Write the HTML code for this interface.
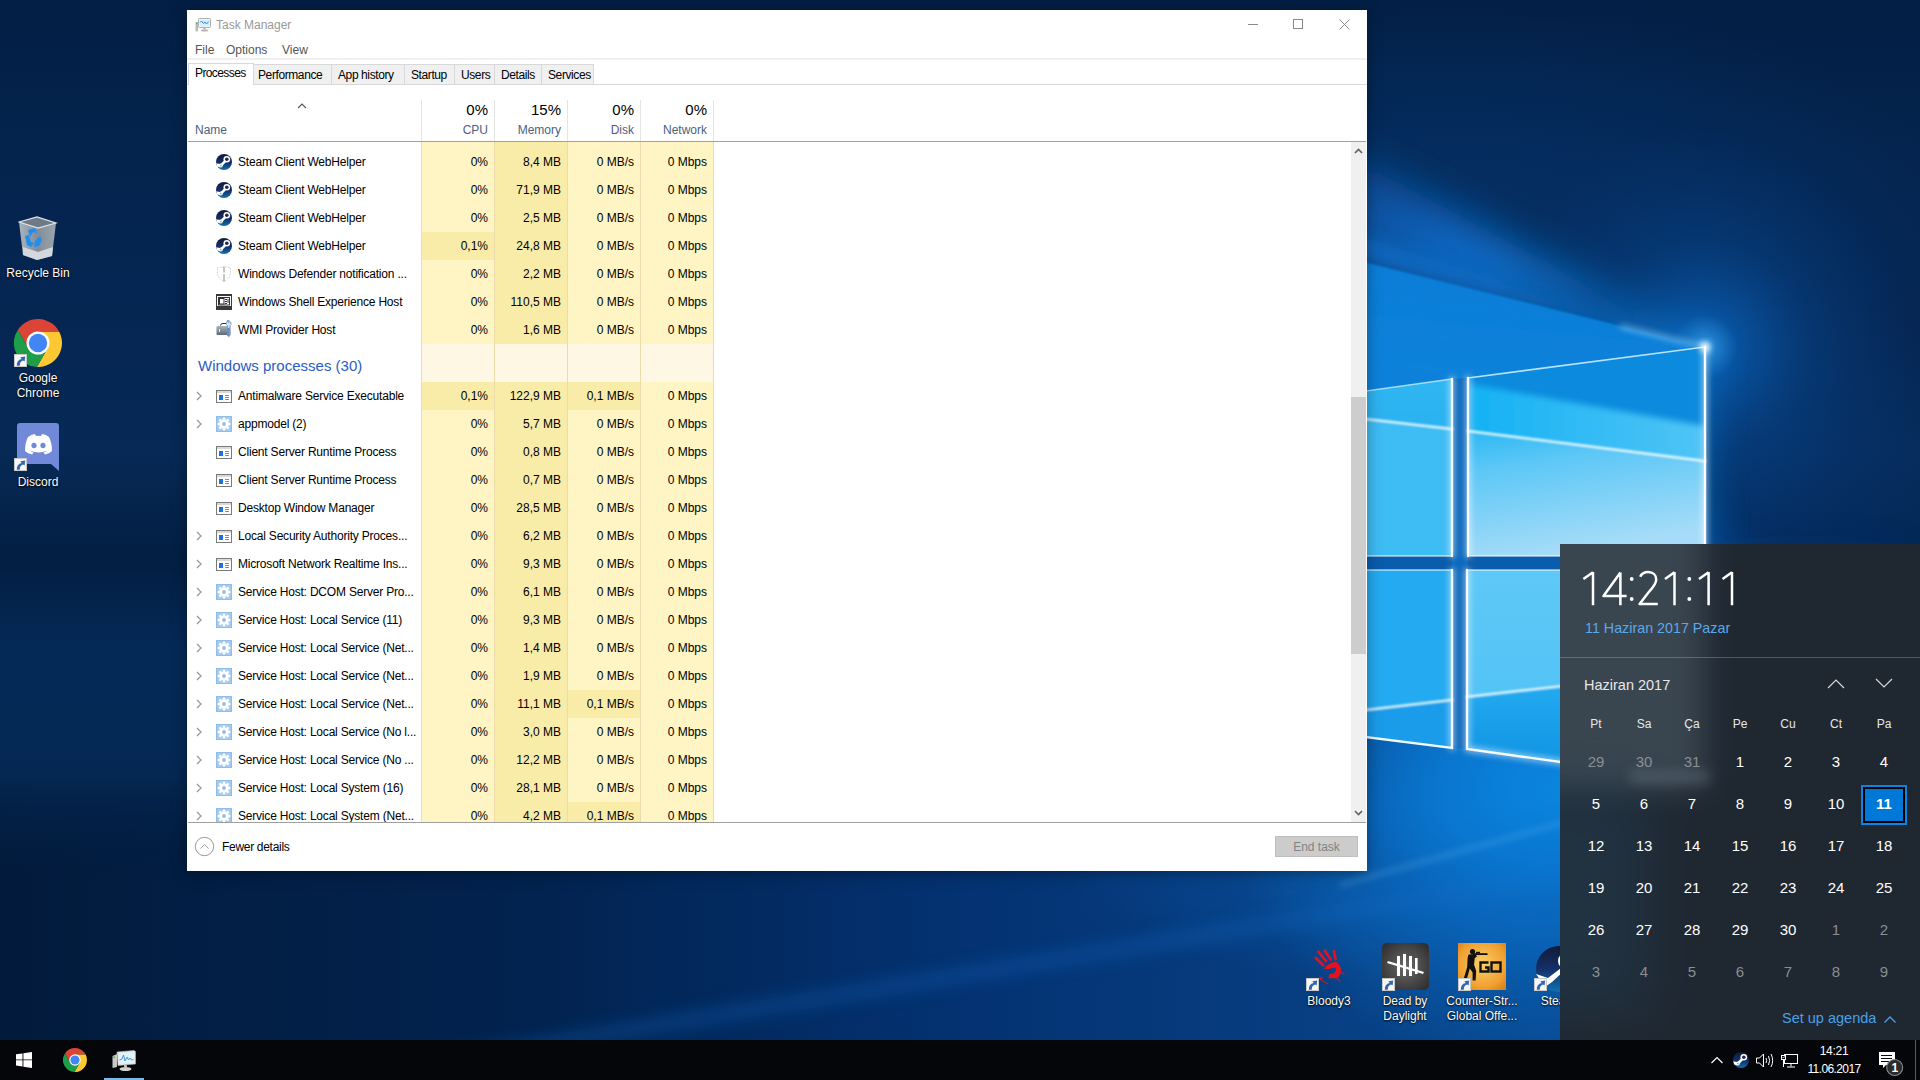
<!DOCTYPE html><html><head><meta charset="utf-8"><style>*{margin:0;padding:0;box-sizing:border-box}
html,body{width:1920px;height:1080px;overflow:hidden;background:#02183a}
body{position:relative;font-family:"Liberation Sans",sans-serif;font-size:12px;color:#000}
.a{position:absolute}
.t{position:absolute;white-space:nowrap;font-size:12px;line-height:12px}
.num{text-align:right}
.grp{font-size:15px;line-height:15px;color:#2a5cc6}
#wall{position:absolute;left:0;top:0}
#tm{position:absolute;left:187px;top:10px;width:1180px;height:861px;background:#fff;box-shadow:0 2px 14px rgba(0,0,0,0.35)}
#list{position:absolute;left:0;top:0;width:1920px;height:822px;overflow:hidden}
.dt{position:absolute;color:#fff;text-align:center;font-size:12px;line-height:15px;text-shadow:0 1px 2px rgba(0,0,0,.9),0 0 1px rgba(0,0,0,.9)}
.tab{position:absolute;top:64px;height:20px;background:#f0f0f0;border:1px solid #d9d9d9;border-bottom:none}
.hd{position:absolute;text-align:right;color:#4d6082;font-size:12px;line-height:12px;white-space:nowrap}
.hp{position:absolute;text-align:right;color:#000;font-size:15px;line-height:15px;white-space:nowrap}
#fly{position:absolute;left:1560px;top:544px;width:360px;height:496px;background:#1f2731;overflow:hidden}
.cd{position:absolute;width:48px;text-align:center;color:#fff;font-size:15px;line-height:15px}
.cg{color:#8a8e93}
.ch{position:absolute;width:48px;text-align:center;color:#e8e8e8;font-size:12px;line-height:12px}
#tb{position:absolute;left:0;top:1040px;width:1920px;height:40px;background:#040609}

.nm{letter-spacing:-0.2px}
</style></head><body>
<svg id="wall" width="1920" height="1080" viewBox="0 0 1920 1080">
<defs>
<linearGradient id="bg" x1="0" y1="0" x2="0" y2="1080" gradientUnits="userSpaceOnUse">
<stop offset="0" stop-color="#031e44"/>
<stop offset="0.14" stop-color="#04244e"/>
<stop offset="0.3" stop-color="#052652"/>
<stop offset="0.42" stop-color="#062955"/>
<stop offset="0.52" stop-color="#031f42"/>
<stop offset="0.6" stop-color="#052957"/>
<stop offset="0.7" stop-color="#052955"/>
<stop offset="0.83" stop-color="#021b3b"/>
<stop offset="1" stop-color="#021836"/>
</linearGradient>
<linearGradient id="ur" x1="0" y1="0" x2="0.3" y2="1">
<stop offset="0" stop-color="#2ab8f4"/><stop offset="0.3" stop-color="#5cc7f6"/><stop offset="1" stop-color="#a6dcf8"/></linearGradient>
<linearGradient id="ul" x1="0" y1="0" x2="0" y2="1">
<stop offset="0" stop-color="#30b6f2"/><stop offset="1" stop-color="#1aa6ee"/></linearGradient>
<linearGradient id="lr" x1="0" y1="0" x2="0" y2="1">
<stop offset="0" stop-color="#5ec8f7"/><stop offset="1" stop-color="#4cc0f5"/></linearGradient>
<linearGradient id="lrb" x1="0" y1="0" x2="0" y2="1">
<stop offset="0" stop-color="#26aff1"/><stop offset="1" stop-color="#0c8ee2"/></linearGradient>
<radialGradient id="rbelow" cx="0.55" cy="0.3" r="0.6"><stop offset="0" stop-color="#0a78d4"/><stop offset="0.35" stop-color="#0a60b8"/><stop offset="0.7" stop-color="#064a94" stop-opacity="0.6"/><stop offset="1" stop-color="#053a7a" stop-opacity="0"/></radialGradient>
<linearGradient id="below" x1="0" y1="0" x2="0" y2="1">
<stop offset="0" stop-color="#0a78d4"/><stop offset="0.35" stop-color="#0a62bc"/><stop offset="1" stop-color="#04387a"/></linearGradient>
<linearGradient id="fan" x1="1" y1="1" x2="0" y2="0">
<stop offset="0" stop-color="#0a7ad6"/><stop offset="0.5" stop-color="#0a5cb0"/><stop offset="1" stop-color="#063e80" stop-opacity="0"/></linearGradient>
<radialGradient id="cg" cx="1705" cy="347" r="220" gradientUnits="userSpaceOnUse">
<stop offset="0" stop-color="#3aa8f4" stop-opacity="0.9"/><stop offset="0.15" stop-color="#0a6ac8" stop-opacity="0.6"/><stop offset="0.5" stop-color="#074a94" stop-opacity="0.35"/><stop offset="1" stop-color="#063a80" stop-opacity="0"/></radialGradient>
<filter id="b80" x="-50%" y="-50%" width="200%" height="200%"><feGaussianBlur stdDeviation="80"/></filter>
<filter id="b40" x="-50%" y="-50%" width="200%" height="200%"><feGaussianBlur stdDeviation="40"/></filter>
<filter id="b20" x="-50%" y="-50%" width="200%" height="200%"><feGaussianBlur stdDeviation="20"/></filter>
<filter id="b8" x="-50%" y="-50%" width="200%" height="200%"><feGaussianBlur stdDeviation="8"/></filter>
<filter id="b4" x="-50%" y="-50%" width="200%" height="200%"><feGaussianBlur stdDeviation="3"/></filter>
<filter id="b2" x="-50%" y="-50%" width="200%" height="200%"><feGaussianBlur stdDeviation="1.2"/></filter>
<radialGradient id="g0a5cb450"><stop offset="0" stop-color="#0a5cb4" stop-opacity="0.5"/><stop offset="0.5" stop-color="#0a5cb4" stop-opacity="0.30"/><stop offset="1" stop-color="#0a5cb4" stop-opacity="0"/></radialGradient><radialGradient id="g053a7850"><stop offset="0" stop-color="#053a78" stop-opacity="0.5"/><stop offset="0.5" stop-color="#053a78" stop-opacity="0.30"/><stop offset="1" stop-color="#053a78" stop-opacity="0"/></radialGradient><radialGradient id="g053a7c100"><stop offset="0" stop-color="#053a7c" stop-opacity="1.0"/><stop offset="0.5" stop-color="#053a7c" stop-opacity="0.60"/><stop offset="1" stop-color="#053a7c" stop-opacity="0"/></radialGradient><radialGradient id="g06408a45"><stop offset="0" stop-color="#06408a" stop-opacity="0.45"/><stop offset="0.5" stop-color="#06408a" stop-opacity="0.27"/><stop offset="1" stop-color="#06408a" stop-opacity="0"/></radialGradient><radialGradient id="g0a78d4100"><stop offset="0" stop-color="#0a78d4" stop-opacity="1.0"/><stop offset="0.5" stop-color="#0a78d4" stop-opacity="0.60"/><stop offset="1" stop-color="#0a78d4" stop-opacity="0"/></radialGradient><radialGradient id="g0a88e0100"><stop offset="0" stop-color="#0a88e0" stop-opacity="0.9"/><stop offset="0.6" stop-color="#0a80dc" stop-opacity="0.5"/><stop offset="1" stop-color="#0a78d4" stop-opacity="0"/></radialGradient></defs>
<rect width="1920" height="1080" fill="url(#bg)"/>
<!-- broad glow -->
<ellipse cx="1550" cy="620" rx="600" ry="380" fill="url(#g053a7c100)" opacity="0.75"/>


<!-- fan glow above beam edge -->
<ellipse cx="1450" cy="230" rx="513" ry="243" fill="url(#g053a7850)"/>

<clipPath id="urclip"><polygon points="1468,378 1705,347 1705,556 1468,556"/></clipPath>
<clipPath id="fanclip"><polygon points="1705,347 1000,-30 1000,172"/></clipPath>
<radialGradient id="fang" cx="1705" cy="347" r="620" gradientUnits="userSpaceOnUse"><stop offset="0" stop-color="#3aa8f4" stop-opacity="1"/><stop offset="0.15" stop-color="#0a7ed8" stop-opacity="0.95"/><stop offset="0.45" stop-color="#0a6ac8" stop-opacity="0.95"/><stop offset="0.62" stop-color="#0a5ab0" stop-opacity="0.7"/><stop offset="0.9" stop-color="#0a5ab0" stop-opacity="0"/></radialGradient>
<g filter="url(#b20)"><rect x="1000" y="-80" width="705" height="430" fill="url(#fang)" clip-path="url(#fanclip)"/></g>
<polygon points="1705,347 1000,120 1000,171" fill="#0a7ad8" filter="url(#b8)" opacity="0.6"/>
<circle cx="1705" cy="347" r="220" fill="url(#cg)"/>
<!-- lit area below beam edge -->
<polygon points="1705,347 1000,171 1000,600 1705,600" fill="#0a7ed8" filter="url(#b2)"/>
<polygon points="1705,347 1000,280 1000,600 1705,600" fill="#0a84dc" filter="url(#b20)" opacity="0.6"/>
<line x1="1620" y1="326" x2="1705" y2="347" stroke="#bfe6ff" stroke-width="3" filter="url(#b4)" opacity="0.7"/>
<!-- area below panes -->
<linearGradient id="bot" x1="0" y1="0" x2="1560" y2="0" gradientUnits="userSpaceOnUse"><stop offset="0" stop-color="#021b3c"/><stop offset="0.35" stop-color="#022350"/><stop offset="0.62" stop-color="#043272"/><stop offset="0.85" stop-color="#073f82"/><stop offset="1" stop-color="#08468e"/></linearGradient>
<linearGradient id="botm" x1="0" y1="780" x2="0" y2="880" gradientUnits="userSpaceOnUse"><stop offset="0" stop-color="#fff" stop-opacity="0"/><stop offset="1" stop-color="#fff" stop-opacity="1"/></linearGradient>
<mask id="botmask" maskUnits="userSpaceOnUse" x="0" y="0" width="1920" height="1080"><rect x="0" y="780" width="1920" height="300" fill="url(#botm)"/></mask>
<rect x="0" y="780" width="1700" height="300" fill="url(#bot)" mask="url(#botmask)"/>
<ellipse cx="1450" cy="850" rx="405" ry="135" fill="url(#g0a5cb450)"/>
<polygon points="400,1060 1600,860 1600,880 400,1075" fill="#0a60b8" filter="url(#b8)" opacity="0.35"/>
<linearGradient id="bl2" x1="0" y1="0" x2="0" y2="1"><stop offset="0" stop-color="#0a7ad8"/><stop offset="0.45" stop-color="#0a62c0"/><stop offset="1" stop-color="#073e80" stop-opacity="0.4"/></linearGradient>
<ellipse cx="1540" cy="760" rx="320" ry="320" fill="url(#g0a78d4100)"/>
<ellipse cx="1560" cy="790" rx="220" ry="120" fill="url(#g0a88e0100)"/>
<polygon points="1340,882 1600,810 1600,815 1340,888" fill="#7cc8f8" filter="url(#b4)" opacity="0.22"/>
<polygon points="1100,640 1705,640 1705,782 1467,749 1100,704" fill="#0a78d4"/>
<polygon points="1705,600 1705,782 1900,900 1900,600" fill="#053a7c" filter="url(#b40)" opacity="0.8"/>
<!-- gaps -->
<rect x="1000" y="555" width="705" height="16" fill="#0a5cac"/>
<polygon points="1452,379 1468,378 1468,749 1452,748" fill="#0a68bc"/>
<!-- upper-left pane -->
<polygon points="1000,442 1452,379 1452,556 1000,556" fill="url(#ul)"/>
<polygon points="1000,377 1452,429 1452,556 1000,556" fill="#3ebcf4"/>
<!-- upper-right pane -->
<polygon points="1468,378 1705,347 1705,556 1468,556" fill="#0c8add"/>
<linearGradient id="urband" x1="1468" y1="0" x2="1705" y2="0" gradientUnits="userSpaceOnUse"><stop offset="0" stop-color="#14b2f4"/><stop offset="1" stop-color="#50c4f5"/></linearGradient>
<g clip-path="url(#urclip)"><polygon points="1468,384 1705,426 1705,556 1468,556" fill="url(#urband)" filter="url(#b4)"/></g>
<polygon points="1468,431 1705,461 1705,556 1468,556" fill="url(#ur)"/>
<!-- lower-left pane -->
<polygon points="1000,570 1452,570 1452,748 1000,691" fill="#24aaf0"/>
<polygon points="1100,741 1452,700 1452,748 1100,704" fill="#1a9ceb"/>
<!-- lower-right pane -->
<polygon points="1467,570 1705,570 1705,782 1467,749" fill="url(#lr)"/>
<polygon points="1467,697 1705,670 1705,782 1467,749" fill="url(#lrb)"/>
<!-- white lines -->
<g stroke="#fff" fill="none" stroke-linecap="round">
<g filter="url(#b4)" stroke-width="5" opacity="0.6">
<polyline points="1468,556 1468,378"/><polyline points="1705,347 1705,556"/>
<polyline points="1452,379 1452,556"/>
<polyline points="1452,570 1452,748"/>
<polyline points="1467,570 1467,749 1705,782"/>
</g>
<line x1="1468" y1="378" x2="1705" y2="347" stroke="#c8ecff" stroke-width="1.6" opacity="0.9"/>
<line x1="1000" y1="442" x2="1452" y2="379" stroke="#c8ecff" stroke-width="1.4" opacity="0.8"/>
<g stroke-width="2.4" opacity="0.95">
<polyline points="1468,556 1468,378"/><polyline points="1705,347 1705,556"/>
<polyline points="1452,379 1452,556"/>
<polyline points="1452,570 1452,748 1000,691"/>
<polyline points="1467,570 1467,749 1705,782"/>
<line x1="1000" y1="556" x2="1452" y2="556" stroke-width="1.5" opacity="0.7"/>
<line x1="1468" y1="556" x2="1705" y2="556" stroke-width="1.5" opacity="0.7"/>
<line x1="1452" y1="570" x2="1000" y2="570" stroke-width="1.5" opacity="0.7"/>
<line x1="1467" y1="570" x2="1705" y2="570" stroke-width="1.5" opacity="0.7"/>
</g>
<g stroke-width="2.5" opacity="0.85" filter="url(#b2)">
<line x1="1468" y1="431" x2="1705" y2="461"/>
<line x1="1000" y1="377" x2="1452" y2="429"/>
<line x1="1100" y1="741" x2="1452" y2="700"/>
<line x1="1467" y1="697" x2="1705" y2="670"/>
</g>
</g>
<circle cx="1705" cy="347" r="5" fill="#fff" filter="url(#b4)"/>
</svg>

<!-- Recycle bin -->
<svg class="a" style="left:18px;top:216px" width="40" height="46" viewBox="0 0 40 46">
<defs><linearGradient id="rb" x1="0" y1="0" x2="1" y2="0"><stop offset="0" stop-color="#b9c0c8"/><stop offset="0.5" stop-color="#8d96a0"/><stop offset="1" stop-color="#a8b0b8"/></linearGradient></defs>
<path d="M1 6 L19 1 L38 7 L34 40 L19 44 L5 39 Z" fill="url(#rb)" opacity="0.92"/>
<path d="M1 6 L19 1 L38 7 L20 12 Z" fill="#6f7a86" stroke="#e0e4e8" stroke-width="1.2"/>
<path d="M5 31 L20 36 L35 31 L34 40 L19 44 L5 39 Z" fill="#d4d8dc"/>
<g fill="#1e8ef0"><path d="M10 14 L17 12 L19 17 L15 16 L12 21 Z"/><path d="M7 20 L11 19 L13 26 L16 27 L13 31 L9 29 Z"/><path d="M17 25 L22 20 L24 24 L21 30 L16 31 Z"/></g>
</svg>
<div class="dt" style="left:0;top:266px;width:76px">Recycle Bin</div>
<!-- Chrome -->
<svg class="a" style="left:14px;top:319px" width="48" height="48" viewBox="0 0 48 48"><path d="M3.82 11.05 A24 24 0 0 1 45.3 13 L24 13 L14.5 29.5 Z" fill="#db4437"/><path d="M45.3 13 A24 24 0 0 1 22.9 48 L33.5 29.5 L24 13 Z" fill="#fcc934"/><path d="M22.9 48 A24 24 0 0 1 3.82 11.05 L14.5 29.5 L33.5 29.5 Z" fill="#1e9e48"/><circle cx="24" cy="24" r="11.5" fill="#fff"/><circle cx="24" cy="24" r="9.2" fill="#4285f4"/></svg>
<svg class="a" style="left:14px;top:354px" width="13" height="13" viewBox="0 0 13 13"><rect width="13" height="13" fill="#f6f6f6"/><rect x="0.5" y="0.5" width="12" height="12" fill="none" stroke="#c8c8c8"/><path d="M2.8 11.8 Q2.6 6 7.6 5 L6.4 3.2 L11.2 2.6 L10.6 7.6 L9.2 6.4 Q5.6 7.4 5.8 11.8 Z" fill="#3467b3"/></svg>
<div class="dt" style="left:0;top:371px;width:76px">Google<br>Chrome</div>
<!-- Discord -->
<svg class="a" style="left:17px;top:423px" width="43" height="48" viewBox="0 0 43 48">
<path d="M3 0 H39 Q42 0 42 3 V48 L34 41 H3 Q0 41 0 38 V3 Q0 0 3 0 Z" fill="#7289da"/>
<path d="M11 14 Q15 11 18 11 L19 13 Q21.5 12.5 24 13 L25 11 Q28 11 32 14 Q35 20 35 28 Q32 31 28 31.5 L26.5 29.5 Q29 28.5 30 27.5 Q21.5 31.5 13 27.5 Q14 28.5 16.5 29.5 L15 31.5 Q11 31 8 28 Q8 20 11 14 Z" fill="#fff"/>
<ellipse cx="17" cy="22.5" rx="2.6" ry="2.8" fill="#7289da"/>
<ellipse cx="26" cy="22.5" rx="2.6" ry="2.8" fill="#7289da"/>
</svg>
<svg class="a" style="left:14px;top:458px" width="13" height="13" viewBox="0 0 13 13"><rect width="13" height="13" fill="#f6f6f6"/><rect x="0.5" y="0.5" width="12" height="12" fill="none" stroke="#c8c8c8"/><path d="M2.8 11.8 Q2.6 6 7.6 5 L6.4 3.2 L11.2 2.6 L10.6 7.6 L9.2 6.4 Q5.6 7.4 5.8 11.8 Z" fill="#3467b3"/></svg>
<div class="dt" style="left:0;top:475px;width:76px">Discord</div>
<!-- bottom right icons -->
<svg class="a" style="left:1312px;top:947px" width="36" height="42" viewBox="0 0 36 42"><g stroke="#e8101c" stroke-linecap="round" fill="none"><path d="M6.3 4.7 L14.1 14.1 M12.7 3.3 L18.6 12.4 M21.9 4 L23.6 12.2 M3.6 10.8 L11.3 18.3" stroke-width="2.6"/><path d="M7.4 31.9 L15.8 36.9 M25.2 31.3 L28 34.1 M29.1 25.2 L31.9 27.4" stroke-width="1.1"/></g><path d="M12.4 20.8 Q17 15.5 23.6 14.7 Q28.8 17 29.1 24.1 Q28.5 29.5 24.7 31.3 L16.3 31.3 L17.4 26.9 Q22.5 26.5 23 25.2 Q24.5 22 23.6 20.8 Q21 20.2 18 21.9 L12.4 21.9 Z" fill="#e8101c"/><path d="M5 31.5 Q9 29.5 11 30.5 L10 32.5 Z" fill="#e8101c"/></svg>
<svg class="a" style="left:1306px;top:978px" width="13" height="13" viewBox="0 0 13 13"><rect width="13" height="13" fill="#f6f6f6"/><rect x="0.5" y="0.5" width="12" height="12" fill="none" stroke="#c8c8c8"/><path d="M2.8 11.8 Q2.6 6 7.6 5 L6.4 3.2 L11.2 2.6 L10.6 7.6 L9.2 6.4 Q5.6 7.4 5.8 11.8 Z" fill="#3467b3"/></svg>
<div class="dt" style="left:1291px;top:994px;width:76px">Bloody3</div>
<svg class="a" style="left:1382px;top:943px" width="47" height="47" viewBox="0 0 47 47">
<defs><radialGradient id="dbd" cx="0.5" cy="0.5" r="0.7"><stop offset="0" stop-color="#6a6a6a"/><stop offset="1" stop-color="#2a2a2a"/></radialGradient></defs>
<rect width="47" height="47" rx="5" fill="url(#dbd)"/>
<g fill="#fff"><rect x="15" y="13" width="3" height="20"/><rect x="21" y="11" width="3" height="22"/><rect x="27" y="13" width="3" height="20"/><rect x="33" y="15" width="2.6" height="16"/><path d="M6 18 L42 29 L41 31 L5 20 Z"/></g>
</svg>
<svg class="a" style="left:1382px;top:978px" width="13" height="13" viewBox="0 0 13 13"><rect width="13" height="13" fill="#f6f6f6"/><rect x="0.5" y="0.5" width="12" height="12" fill="none" stroke="#c8c8c8"/><path d="M2.8 11.8 Q2.6 6 7.6 5 L6.4 3.2 L11.2 2.6 L10.6 7.6 L9.2 6.4 Q5.6 7.4 5.8 11.8 Z" fill="#3467b3"/></svg>
<div class="dt" style="left:1367px;top:994px;width:76px">Dead by<br>Daylight</div>
<svg class="a" style="left:1458px;top:943px" width="48" height="47" viewBox="0 0 48 47">
<defs><radialGradient id="csg" cx="0.5" cy="0.45" r="0.7"><stop offset="0" stop-color="#fbd06a"/><stop offset="0.7" stop-color="#f0a030"/><stop offset="1" stop-color="#d8801a"/></radialGradient></defs>
<rect width="48" height="47" fill="url(#csg)"/>
<circle cx="14.5" cy="8.5" r="2.6" fill="#111"/><path d="M10.5 11.5 L17.5 11 L19 13.5 L16.8 15 L16 21.5 L18.2 28 L17.6 37.5 L14.6 37.5 L14.6 29.5 L11.8 25.5 L8.4 37.5 L5.2 37.5 L9.2 24 L9.6 15 Z" fill="#111"/><rect x="15" y="10.2" width="14.5" height="1.8" fill="#111"/><rect x="18" y="8.8" width="4" height="1.6" fill="#111"/>
<g fill="none" stroke="#111" stroke-width="2.4"><path d="M30.5 19.5 H22.5 V28.5 H30.5 V24.5 H27"/><rect x="33.5" y="19.5" width="9" height="9"/></g></svg>
<svg class="a" style="left:1458px;top:978px" width="13" height="13" viewBox="0 0 13 13"><rect width="13" height="13" fill="#f6f6f6"/><rect x="0.5" y="0.5" width="12" height="12" fill="none" stroke="#c8c8c8"/><path d="M2.8 11.8 Q2.6 6 7.6 5 L6.4 3.2 L11.2 2.6 L10.6 7.6 L9.2 6.4 Q5.6 7.4 5.8 11.8 Z" fill="#3467b3"/></svg>
<div class="dt" style="left:1444px;top:994px;width:76px">Counter-Str...<br>Global Offe...</div>
<svg class="a" style="left:1535px;top:945px" width="48" height="48" viewBox="0 0 48 48">
<defs><linearGradient id="stg" x1="0" y1="0" x2="0" y2="1"><stop offset="0" stop-color="#111a36"/><stop offset="0.5" stop-color="#14306a"/><stop offset="1" stop-color="#0f72b0"/></linearGradient></defs>
<circle cx="24" cy="24" r="23" fill="url(#stg)"/>
<path d="M1 29 L13 33 L26 23 L29 26 L17 37 L10 42 Z" fill="#fff"/>
<circle cx="32" cy="16" r="9" fill="#fff"/><circle cx="32" cy="16" r="5" fill="#1c2a5a"/>
</svg>
<svg class="a" style="left:1534px;top:978px" width="13" height="13" viewBox="0 0 13 13"><rect width="13" height="13" fill="#f6f6f6"/><rect x="0.5" y="0.5" width="12" height="12" fill="none" stroke="#c8c8c8"/><path d="M2.8 11.8 Q2.6 6 7.6 5 L6.4 3.2 L11.2 2.6 L10.6 7.6 L9.2 6.4 Q5.6 7.4 5.8 11.8 Z" fill="#3467b3"/></svg>
<div class="dt" style="left:1520px;top:994px;width:76px">Steam</div>

<div id="tm"></div>
<!-- title icon -->
<svg class="a" style="left:195px;top:18px" width="16" height="14" viewBox="0 0 16 14">
<rect x="0.5" y="4" width="2.5" height="9.5" rx="1" fill="#b8b8b8"/><rect x="1" y="4.5" width="1.5" height="1.5" fill="#3fd23f"/>
<rect x="3.5" y="0.5" width="12" height="9" rx="0.8" fill="#f4f4f4" stroke="#b0b0b0"/>
<rect x="4.8" y="1.8" width="9.4" height="6.4" fill="#d4efff"/>
<polyline points="5,4.5 6.5,3 8.5,5.5 10,4 11.5,6 13.8,3.5" fill="none" stroke="#2083c8" stroke-width="0.9"/>
<rect x="8.5" y="9.5" width="2" height="2" fill="#aaa"/><rect x="6" y="11.5" width="7" height="2" rx="1" fill="#b5b5b5"/>
</svg>
<div class="t" style="left:216px;top:19px;color:#999">Task Manager</div>
<!-- caption buttons -->
<div class="a" style="left:1248px;top:24px;width:10px;height:1px;background:#8a8a8a"></div>
<div class="a" style="left:1293px;top:19px;width:10px;height:10px;border:1px solid #8a8a8a"></div>
<svg class="a" style="left:1339px;top:19px" width="11" height="11" viewBox="0 0 11 11"><path d="M0.5 0.5 L10.5 10.5 M10.5 0.5 L0.5 10.5" stroke="#8a8a8a" stroke-width="1"/></svg>
<!-- menu -->
<div class="t" style="left:195px;top:44px;color:#555">File</div>
<div class="t" style="left:226px;top:44px;color:#555">Options</div>
<div class="t" style="left:282px;top:44px;color:#555">View</div>
<div class="a" style="left:187px;top:58px;width:1180px;height:2px;background:#f0f0f0"></div>
<!-- tabs -->
<div class="tab" style="left:253px;width:79px"></div>
<div class="tab" style="left:331px;width:74px"></div>
<div class="tab" style="left:404px;width:51px"></div>
<div class="tab" style="left:454px;width:41px"></div>
<div class="tab" style="left:494px;width:48px"></div>
<div class="tab" style="left:541px;width:53px"></div>
<div class="a" style="left:187px;top:84px;width:1180px;height:1px;background:#d9d9d9"></div>
<div class="a" style="left:188px;top:63px;width:66px;height:22px;background:#fff;border:1px solid #d9d9d9;border-bottom:none"></div>
<div class="t" style="left:195px;top:67px;letter-spacing:-0.6px">Processes</div>
<div class="t" style="left:258px;top:69px;letter-spacing:-0.4px">Performance</div>
<div class="t" style="left:338px;top:69px;letter-spacing:-0.4px">App history</div>
<div class="t" style="left:411px;top:69px;letter-spacing:-0.4px">Startup</div>
<div class="t" style="left:461px;top:69px;letter-spacing:-0.4px">Users</div>
<div class="t" style="left:501px;top:69px;letter-spacing:-0.4px">Details</div>
<div class="t" style="left:548px;top:69px;letter-spacing:-0.4px">Services</div>
<!-- header -->
<svg class="a" style="left:297px;top:102px" width="10" height="7" viewBox="0 0 10 7"><path d="M1 6 L5 2 L9 6" fill="none" stroke="#555" stroke-width="1.1"/></svg>
<div class="hd" style="left:195px;top:124px;text-align:left">Name</div>
<div class="a" style="left:421px;top:100px;width:1px;height:41px;background:#e5e5e5"></div>
<div class="a" style="left:494px;top:100px;width:1px;height:41px;background:#e5e5e5"></div>
<div class="a" style="left:567px;top:100px;width:1px;height:41px;background:#e5e5e5"></div>
<div class="a" style="left:640px;top:100px;width:1px;height:41px;background:#e5e5e5"></div>
<div class="a" style="left:713px;top:100px;width:1px;height:41px;background:#e5e5e5"></div>
<div class="hp" style="left:421px;top:102px;width:67px">0%</div>
<div class="hp" style="left:494px;top:102px;width:67px">15%</div>
<div class="hp" style="left:567px;top:102px;width:67px">0%</div>
<div class="hp" style="left:640px;top:102px;width:67px">0%</div>
<div class="hd" style="left:421px;top:124px;width:67px">CPU</div>
<div class="hd" style="left:494px;top:124px;width:67px">Memory</div>
<div class="hd" style="left:567px;top:124px;width:67px">Disk</div>
<div class="hd" style="left:640px;top:124px;width:67px">Network</div>
<div class="a" style="left:188px;top:141px;width:1178px;height:1px;background:#a0a0a0"></div>
<!-- scrollbar -->
<div class="a" style="left:1351px;top:142px;width:15px;height:680px;background:#f0f0f0"></div>
<div class="a" style="left:1351px;top:397px;width:15px;height:257px;background:#cdcdcd"></div>
<svg class="a" style="left:1354px;top:147px" width="9" height="8" viewBox="0 0 9 8"><path d="M1 6 L4.5 2.5 L8 6" fill="none" stroke="#606060" stroke-width="1.6"/></svg>
<svg class="a" style="left:1354px;top:809px" width="9" height="8" viewBox="0 0 9 8"><path d="M1 2 L4.5 5.5 L8 2" fill="none" stroke="#606060" stroke-width="1.6"/></svg>

<div id="list">
<div class="a" style="left:421px;top:142px;width:73px;height:6px;background:#fff4c4"></div><div class="a" style="left:494px;top:142px;width:73px;height:6px;background:#f9eca8"></div><div class="a" style="left:567px;top:142px;width:73px;height:6px;background:#fff4c4"></div><div class="a" style="left:640px;top:142px;width:73px;height:6px;background:#fff4c4"></div>
<div class="a" style="left:421px;top:148px;width:73px;height:28px;background:#fff4c4"></div><div class="t num" style="left:421px;top:156px;width:67px">0%</div><div class="a" style="left:494px;top:148px;width:73px;height:28px;background:#f9eca8"></div><div class="t num" style="left:494px;top:156px;width:67px">8,4 MB</div><div class="a" style="left:567px;top:148px;width:73px;height:28px;background:#fff4c4"></div><div class="t num" style="left:567px;top:156px;width:67px">0 MB/s</div><div class="a" style="left:640px;top:148px;width:73px;height:28px;background:#fff4c4"></div><div class="t num" style="left:640px;top:156px;width:67px">0 Mbps</div><svg class="a" style="left:216px;top:154px" width="16" height="16" viewBox="0 0 16 16"><defs><linearGradient id="sg216154" x1="0" y1="0" x2="0" y2="1"><stop offset="0" stop-color="#111a36"/><stop offset="0.55" stop-color="#14306a"/><stop offset="1" stop-color="#0f72b0"/></linearGradient></defs><circle cx="8" cy="8" r="8" fill="url(#sg216154)"/><path d="M0.2 9.2 L4.8 10.2 L4.4 13.6 L1.2 12.4 Z" fill="#fff"/><line x1="10.4" y1="5.8" x2="4.8" y2="11.6" stroke="#fff" stroke-width="2.6"/><circle cx="10.8" cy="5.2" r="3.3" fill="#fff"/><circle cx="10.8" cy="5.2" r="1.8" fill="#1c2a5a"/><circle cx="4.8" cy="11.6" r="2" fill="#fff"/><circle cx="4.8" cy="11.6" r="0.9" fill="#3b6fa0" opacity="0.6"/></svg><div class="t nm" style="left:238px;top:156px">Steam Client WebHelper</div>
<div class="a" style="left:421px;top:176px;width:73px;height:28px;background:#fff4c4"></div><div class="t num" style="left:421px;top:184px;width:67px">0%</div><div class="a" style="left:494px;top:176px;width:73px;height:28px;background:#f9eca8"></div><div class="t num" style="left:494px;top:184px;width:67px">71,9 MB</div><div class="a" style="left:567px;top:176px;width:73px;height:28px;background:#fff4c4"></div><div class="t num" style="left:567px;top:184px;width:67px">0 MB/s</div><div class="a" style="left:640px;top:176px;width:73px;height:28px;background:#fff4c4"></div><div class="t num" style="left:640px;top:184px;width:67px">0 Mbps</div><svg class="a" style="left:216px;top:182px" width="16" height="16" viewBox="0 0 16 16"><defs><linearGradient id="sg216182" x1="0" y1="0" x2="0" y2="1"><stop offset="0" stop-color="#111a36"/><stop offset="0.55" stop-color="#14306a"/><stop offset="1" stop-color="#0f72b0"/></linearGradient></defs><circle cx="8" cy="8" r="8" fill="url(#sg216182)"/><path d="M0.2 9.2 L4.8 10.2 L4.4 13.6 L1.2 12.4 Z" fill="#fff"/><line x1="10.4" y1="5.8" x2="4.8" y2="11.6" stroke="#fff" stroke-width="2.6"/><circle cx="10.8" cy="5.2" r="3.3" fill="#fff"/><circle cx="10.8" cy="5.2" r="1.8" fill="#1c2a5a"/><circle cx="4.8" cy="11.6" r="2" fill="#fff"/><circle cx="4.8" cy="11.6" r="0.9" fill="#3b6fa0" opacity="0.6"/></svg><div class="t nm" style="left:238px;top:184px">Steam Client WebHelper</div>
<div class="a" style="left:421px;top:204px;width:73px;height:28px;background:#fff4c4"></div><div class="t num" style="left:421px;top:212px;width:67px">0%</div><div class="a" style="left:494px;top:204px;width:73px;height:28px;background:#f9eca8"></div><div class="t num" style="left:494px;top:212px;width:67px">2,5 MB</div><div class="a" style="left:567px;top:204px;width:73px;height:28px;background:#fff4c4"></div><div class="t num" style="left:567px;top:212px;width:67px">0 MB/s</div><div class="a" style="left:640px;top:204px;width:73px;height:28px;background:#fff4c4"></div><div class="t num" style="left:640px;top:212px;width:67px">0 Mbps</div><svg class="a" style="left:216px;top:210px" width="16" height="16" viewBox="0 0 16 16"><defs><linearGradient id="sg216210" x1="0" y1="0" x2="0" y2="1"><stop offset="0" stop-color="#111a36"/><stop offset="0.55" stop-color="#14306a"/><stop offset="1" stop-color="#0f72b0"/></linearGradient></defs><circle cx="8" cy="8" r="8" fill="url(#sg216210)"/><path d="M0.2 9.2 L4.8 10.2 L4.4 13.6 L1.2 12.4 Z" fill="#fff"/><line x1="10.4" y1="5.8" x2="4.8" y2="11.6" stroke="#fff" stroke-width="2.6"/><circle cx="10.8" cy="5.2" r="3.3" fill="#fff"/><circle cx="10.8" cy="5.2" r="1.8" fill="#1c2a5a"/><circle cx="4.8" cy="11.6" r="2" fill="#fff"/><circle cx="4.8" cy="11.6" r="0.9" fill="#3b6fa0" opacity="0.6"/></svg><div class="t nm" style="left:238px;top:212px">Steam Client WebHelper</div>
<div class="a" style="left:421px;top:232px;width:73px;height:28px;background:#f9eca8"></div><div class="t num" style="left:421px;top:240px;width:67px">0,1%</div><div class="a" style="left:494px;top:232px;width:73px;height:28px;background:#f9eca8"></div><div class="t num" style="left:494px;top:240px;width:67px">24,8 MB</div><div class="a" style="left:567px;top:232px;width:73px;height:28px;background:#fff4c4"></div><div class="t num" style="left:567px;top:240px;width:67px">0 MB/s</div><div class="a" style="left:640px;top:232px;width:73px;height:28px;background:#fff4c4"></div><div class="t num" style="left:640px;top:240px;width:67px">0 Mbps</div><svg class="a" style="left:216px;top:238px" width="16" height="16" viewBox="0 0 16 16"><defs><linearGradient id="sg216238" x1="0" y1="0" x2="0" y2="1"><stop offset="0" stop-color="#111a36"/><stop offset="0.55" stop-color="#14306a"/><stop offset="1" stop-color="#0f72b0"/></linearGradient></defs><circle cx="8" cy="8" r="8" fill="url(#sg216238)"/><path d="M0.2 9.2 L4.8 10.2 L4.4 13.6 L1.2 12.4 Z" fill="#fff"/><line x1="10.4" y1="5.8" x2="4.8" y2="11.6" stroke="#fff" stroke-width="2.6"/><circle cx="10.8" cy="5.2" r="3.3" fill="#fff"/><circle cx="10.8" cy="5.2" r="1.8" fill="#1c2a5a"/><circle cx="4.8" cy="11.6" r="2" fill="#fff"/><circle cx="4.8" cy="11.6" r="0.9" fill="#3b6fa0" opacity="0.6"/></svg><div class="t nm" style="left:238px;top:240px">Steam Client WebHelper</div>
<div class="a" style="left:421px;top:260px;width:73px;height:28px;background:#fff4c4"></div><div class="t num" style="left:421px;top:268px;width:67px">0%</div><div class="a" style="left:494px;top:260px;width:73px;height:28px;background:#f9eca8"></div><div class="t num" style="left:494px;top:268px;width:67px">2,2 MB</div><div class="a" style="left:567px;top:260px;width:73px;height:28px;background:#fff4c4"></div><div class="t num" style="left:567px;top:268px;width:67px">0 MB/s</div><div class="a" style="left:640px;top:260px;width:73px;height:28px;background:#fff4c4"></div><div class="t num" style="left:640px;top:268px;width:67px">0 Mbps</div><svg class="a" style="left:216px;top:266px" width="16" height="16" viewBox="0 0 16 16"><path d="M1.5 2 Q8 0 14.5 2 L14.5 8 Q13 13 8 15.5 Q3 13 1.5 8 Z" fill="none" stroke="#c4c4c4" stroke-width="0.9" stroke-dasharray="1.5 1.2"/><rect x="7.2" y="0.5" width="1.6" height="6" fill="#b8b8b8"/><rect x="7.2" y="8" width="1.6" height="7.5" fill="#b8b8b8"/></svg><div class="t nm" style="left:238px;top:268px">Windows Defender notification ...</div>
<div class="a" style="left:421px;top:288px;width:73px;height:28px;background:#fff4c4"></div><div class="t num" style="left:421px;top:296px;width:67px">0%</div><div class="a" style="left:494px;top:288px;width:73px;height:28px;background:#f9eca8"></div><div class="t num" style="left:494px;top:296px;width:67px">110,5 MB</div><div class="a" style="left:567px;top:288px;width:73px;height:28px;background:#fff4c4"></div><div class="t num" style="left:567px;top:296px;width:67px">0 MB/s</div><div class="a" style="left:640px;top:288px;width:73px;height:28px;background:#fff4c4"></div><div class="t num" style="left:640px;top:296px;width:67px">0 Mbps</div><svg class="a" style="left:216px;top:294px" width="16" height="16" viewBox="0 0 16 16"><rect x="0" y="0" width="16" height="16" fill="#3a3a3a"/><rect x="1" y="2" width="14" height="10" fill="#fff"/><rect x="2.5" y="3.5" width="11" height="7.5" fill="none" stroke="#333" stroke-width="1"/><rect x="3.5" y="4.5" width="4.5" height="5.5" fill="#fff" stroke="#333" stroke-width="1"/><rect x="9" y="5" width="2" height="1" fill="#333"/><rect x="9" y="7" width="2" height="1" fill="#333"/><rect x="9" y="9" width="2" height="1" fill="#333"/><rect x="11.5" y="5" width="1" height="4" fill="#333"/></svg><div class="t nm" style="left:238px;top:296px">Windows Shell Experience Host</div>
<div class="a" style="left:421px;top:316px;width:73px;height:28px;background:#fff4c4"></div><div class="t num" style="left:421px;top:324px;width:67px">0%</div><div class="a" style="left:494px;top:316px;width:73px;height:28px;background:#f9eca8"></div><div class="t num" style="left:494px;top:324px;width:67px">1,6 MB</div><div class="a" style="left:567px;top:316px;width:73px;height:28px;background:#fff4c4"></div><div class="t num" style="left:567px;top:324px;width:67px">0 MB/s</div><div class="a" style="left:640px;top:316px;width:73px;height:28px;background:#fff4c4"></div><div class="t num" style="left:640px;top:324px;width:67px">0 Mbps</div><svg class="a" style="left:216px;top:320px" width="16" height="18" viewBox="0 0 16 18"><defs><linearGradient id="wg216320" x1="0" y1="0" x2="0" y2="1"><stop offset="0" stop-color="#a8b4be"/><stop offset="1" stop-color="#5e6a76"/></linearGradient></defs><path d="M4.5 5.5 Q4.5 3.5 7 3.5 H10" fill="none" stroke="#333" stroke-width="1"/><rect x="0.5" y="6" width="14" height="9" rx="1" fill="url(#wg216320)"/><rect x="3" y="9" width="1" height="3" fill="#eee"/><path d="M11.5 0.5 Q15.5 1 15 4.5 L13.8 6 V16 Q12.8 17.5 11.6 16 V6 L10.4 4.5 Q10 2 11.5 0.5 L12.4 3 L13.5 2 Z" fill="#dfe8f0" stroke="#5b82b2" stroke-width="0.7"/><rect x="11.8" y="8" width="1.8" height="8" fill="#5f8fd0"/></svg><div class="t nm" style="left:238px;top:324px">WMI Provider Host</div>
<div class="a" style="left:421px;top:344px;width:73px;height:38px;background:#fdf7e4"></div><div class="a" style="left:494px;top:344px;width:73px;height:38px;background:#fdf7e4"></div><div class="a" style="left:567px;top:344px;width:73px;height:38px;background:#fdf7e4"></div><div class="a" style="left:640px;top:344px;width:73px;height:38px;background:#fdf7e4"></div>
<div class="t grp" style="left:198px;top:358px">Windows processes (30)</div>
<div class="a" style="left:421px;top:382px;width:73px;height:28px;background:#f9eca8"></div><div class="t num" style="left:421px;top:390px;width:67px">0,1%</div><div class="a" style="left:494px;top:382px;width:73px;height:28px;background:#f9eca8"></div><div class="t num" style="left:494px;top:390px;width:67px">122,9 MB</div><div class="a" style="left:567px;top:382px;width:73px;height:28px;background:#f9eca8"></div><div class="t num" style="left:567px;top:390px;width:67px">0,1 MB/s</div><div class="a" style="left:640px;top:382px;width:73px;height:28px;background:#fff4c4"></div><div class="t num" style="left:640px;top:390px;width:67px">0 Mbps</div><svg class="a" style="left:216px;top:388px" width="16" height="16" viewBox="0 0 16 16"><rect x="0.5" y="2.5" width="15" height="12" fill="#fff" stroke="#7a7a7a"/><rect x="1" y="3" width="14" height="2" fill="#d8d8d8"/><rect x="3" y="7" width="4" height="5" fill="#1a73d9"/><rect x="9" y="7" width="4" height="1" fill="#8a8a8a"/><rect x="9" y="9" width="4" height="1" fill="#8a8a8a"/><rect x="9" y="11" width="4" height="1" fill="#8a8a8a"/></svg><div class="t nm" style="left:238px;top:390px">Antimalware Service Executable</div><svg class="a" style="left:195px;top:391px" width="8" height="10" viewBox="0 0 8 10"><path d="M2 1 L6 5 L2 9" fill="none" stroke="#9a9a9a" stroke-width="1.3"/></svg>
<div class="a" style="left:421px;top:410px;width:73px;height:28px;background:#fff4c4"></div><div class="t num" style="left:421px;top:418px;width:67px">0%</div><div class="a" style="left:494px;top:410px;width:73px;height:28px;background:#f9eca8"></div><div class="t num" style="left:494px;top:418px;width:67px">5,7 MB</div><div class="a" style="left:567px;top:410px;width:73px;height:28px;background:#fff4c4"></div><div class="t num" style="left:567px;top:418px;width:67px">0 MB/s</div><div class="a" style="left:640px;top:410px;width:73px;height:28px;background:#fff4c4"></div><div class="t num" style="left:640px;top:418px;width:67px">0 Mbps</div><svg class="a" style="left:216px;top:416px" width="16" height="16" viewBox="0 0 16 16"><rect width="16" height="16" fill="#a3cbef"/><rect x="0.5" y="0.5" width="15" height="15" fill="none" stroke="#8fbbe8"/><g fill="#fff" transform="translate(8 8)"><circle r="4.6"/><rect x="-1.3" y="-6.4" width="2.6" height="3" transform="rotate(0)"/><rect x="-1.3" y="-6.4" width="2.6" height="3" transform="rotate(45)"/><rect x="-1.3" y="-6.4" width="2.6" height="3" transform="rotate(90)"/><rect x="-1.3" y="-6.4" width="2.6" height="3" transform="rotate(135)"/><rect x="-1.3" y="-6.4" width="2.6" height="3" transform="rotate(180)"/><rect x="-1.3" y="-6.4" width="2.6" height="3" transform="rotate(225)"/><rect x="-1.3" y="-6.4" width="2.6" height="3" transform="rotate(270)"/><rect x="-1.3" y="-6.4" width="2.6" height="3" transform="rotate(315)"/></g><circle cx="8" cy="8" r="1.9" fill="#8ebde9"/></svg><div class="t nm" style="left:238px;top:418px">appmodel (2)</div><svg class="a" style="left:195px;top:419px" width="8" height="10" viewBox="0 0 8 10"><path d="M2 1 L6 5 L2 9" fill="none" stroke="#9a9a9a" stroke-width="1.3"/></svg>
<div class="a" style="left:421px;top:438px;width:73px;height:28px;background:#fff4c4"></div><div class="t num" style="left:421px;top:446px;width:67px">0%</div><div class="a" style="left:494px;top:438px;width:73px;height:28px;background:#f9eca8"></div><div class="t num" style="left:494px;top:446px;width:67px">0,8 MB</div><div class="a" style="left:567px;top:438px;width:73px;height:28px;background:#fff4c4"></div><div class="t num" style="left:567px;top:446px;width:67px">0 MB/s</div><div class="a" style="left:640px;top:438px;width:73px;height:28px;background:#fff4c4"></div><div class="t num" style="left:640px;top:446px;width:67px">0 Mbps</div><svg class="a" style="left:216px;top:444px" width="16" height="16" viewBox="0 0 16 16"><rect x="0.5" y="2.5" width="15" height="12" fill="#fff" stroke="#7a7a7a"/><rect x="1" y="3" width="14" height="2" fill="#d8d8d8"/><rect x="3" y="7" width="4" height="5" fill="#1a73d9"/><rect x="9" y="7" width="4" height="1" fill="#8a8a8a"/><rect x="9" y="9" width="4" height="1" fill="#8a8a8a"/><rect x="9" y="11" width="4" height="1" fill="#8a8a8a"/></svg><div class="t nm" style="left:238px;top:446px">Client Server Runtime Process</div>
<div class="a" style="left:421px;top:466px;width:73px;height:28px;background:#fff4c4"></div><div class="t num" style="left:421px;top:474px;width:67px">0%</div><div class="a" style="left:494px;top:466px;width:73px;height:28px;background:#f9eca8"></div><div class="t num" style="left:494px;top:474px;width:67px">0,7 MB</div><div class="a" style="left:567px;top:466px;width:73px;height:28px;background:#fff4c4"></div><div class="t num" style="left:567px;top:474px;width:67px">0 MB/s</div><div class="a" style="left:640px;top:466px;width:73px;height:28px;background:#fff4c4"></div><div class="t num" style="left:640px;top:474px;width:67px">0 Mbps</div><svg class="a" style="left:216px;top:472px" width="16" height="16" viewBox="0 0 16 16"><rect x="0.5" y="2.5" width="15" height="12" fill="#fff" stroke="#7a7a7a"/><rect x="1" y="3" width="14" height="2" fill="#d8d8d8"/><rect x="3" y="7" width="4" height="5" fill="#1a73d9"/><rect x="9" y="7" width="4" height="1" fill="#8a8a8a"/><rect x="9" y="9" width="4" height="1" fill="#8a8a8a"/><rect x="9" y="11" width="4" height="1" fill="#8a8a8a"/></svg><div class="t nm" style="left:238px;top:474px">Client Server Runtime Process</div>
<div class="a" style="left:421px;top:494px;width:73px;height:28px;background:#fff4c4"></div><div class="t num" style="left:421px;top:502px;width:67px">0%</div><div class="a" style="left:494px;top:494px;width:73px;height:28px;background:#f9eca8"></div><div class="t num" style="left:494px;top:502px;width:67px">28,5 MB</div><div class="a" style="left:567px;top:494px;width:73px;height:28px;background:#fff4c4"></div><div class="t num" style="left:567px;top:502px;width:67px">0 MB/s</div><div class="a" style="left:640px;top:494px;width:73px;height:28px;background:#fff4c4"></div><div class="t num" style="left:640px;top:502px;width:67px">0 Mbps</div><svg class="a" style="left:216px;top:500px" width="16" height="16" viewBox="0 0 16 16"><rect x="0.5" y="2.5" width="15" height="12" fill="#fff" stroke="#7a7a7a"/><rect x="1" y="3" width="14" height="2" fill="#d8d8d8"/><rect x="3" y="7" width="4" height="5" fill="#1a73d9"/><rect x="9" y="7" width="4" height="1" fill="#8a8a8a"/><rect x="9" y="9" width="4" height="1" fill="#8a8a8a"/><rect x="9" y="11" width="4" height="1" fill="#8a8a8a"/></svg><div class="t nm" style="left:238px;top:502px">Desktop Window Manager</div>
<div class="a" style="left:421px;top:522px;width:73px;height:28px;background:#fff4c4"></div><div class="t num" style="left:421px;top:530px;width:67px">0%</div><div class="a" style="left:494px;top:522px;width:73px;height:28px;background:#f9eca8"></div><div class="t num" style="left:494px;top:530px;width:67px">6,2 MB</div><div class="a" style="left:567px;top:522px;width:73px;height:28px;background:#fff4c4"></div><div class="t num" style="left:567px;top:530px;width:67px">0 MB/s</div><div class="a" style="left:640px;top:522px;width:73px;height:28px;background:#fff4c4"></div><div class="t num" style="left:640px;top:530px;width:67px">0 Mbps</div><svg class="a" style="left:216px;top:528px" width="16" height="16" viewBox="0 0 16 16"><rect x="0.5" y="2.5" width="15" height="12" fill="#fff" stroke="#7a7a7a"/><rect x="1" y="3" width="14" height="2" fill="#d8d8d8"/><rect x="3" y="7" width="4" height="5" fill="#1a73d9"/><rect x="9" y="7" width="4" height="1" fill="#8a8a8a"/><rect x="9" y="9" width="4" height="1" fill="#8a8a8a"/><rect x="9" y="11" width="4" height="1" fill="#8a8a8a"/></svg><div class="t nm" style="left:238px;top:530px">Local Security Authority Proces...</div><svg class="a" style="left:195px;top:531px" width="8" height="10" viewBox="0 0 8 10"><path d="M2 1 L6 5 L2 9" fill="none" stroke="#9a9a9a" stroke-width="1.3"/></svg>
<div class="a" style="left:421px;top:550px;width:73px;height:28px;background:#fff4c4"></div><div class="t num" style="left:421px;top:558px;width:67px">0%</div><div class="a" style="left:494px;top:550px;width:73px;height:28px;background:#f9eca8"></div><div class="t num" style="left:494px;top:558px;width:67px">9,3 MB</div><div class="a" style="left:567px;top:550px;width:73px;height:28px;background:#fff4c4"></div><div class="t num" style="left:567px;top:558px;width:67px">0 MB/s</div><div class="a" style="left:640px;top:550px;width:73px;height:28px;background:#fff4c4"></div><div class="t num" style="left:640px;top:558px;width:67px">0 Mbps</div><svg class="a" style="left:216px;top:556px" width="16" height="16" viewBox="0 0 16 16"><rect x="0.5" y="2.5" width="15" height="12" fill="#fff" stroke="#7a7a7a"/><rect x="1" y="3" width="14" height="2" fill="#d8d8d8"/><rect x="3" y="7" width="4" height="5" fill="#1a73d9"/><rect x="9" y="7" width="4" height="1" fill="#8a8a8a"/><rect x="9" y="9" width="4" height="1" fill="#8a8a8a"/><rect x="9" y="11" width="4" height="1" fill="#8a8a8a"/></svg><div class="t nm" style="left:238px;top:558px">Microsoft Network Realtime Ins...</div><svg class="a" style="left:195px;top:559px" width="8" height="10" viewBox="0 0 8 10"><path d="M2 1 L6 5 L2 9" fill="none" stroke="#9a9a9a" stroke-width="1.3"/></svg>
<div class="a" style="left:421px;top:578px;width:73px;height:28px;background:#fff4c4"></div><div class="t num" style="left:421px;top:586px;width:67px">0%</div><div class="a" style="left:494px;top:578px;width:73px;height:28px;background:#f9eca8"></div><div class="t num" style="left:494px;top:586px;width:67px">6,1 MB</div><div class="a" style="left:567px;top:578px;width:73px;height:28px;background:#fff4c4"></div><div class="t num" style="left:567px;top:586px;width:67px">0 MB/s</div><div class="a" style="left:640px;top:578px;width:73px;height:28px;background:#fff4c4"></div><div class="t num" style="left:640px;top:586px;width:67px">0 Mbps</div><svg class="a" style="left:216px;top:584px" width="16" height="16" viewBox="0 0 16 16"><rect width="16" height="16" fill="#a3cbef"/><rect x="0.5" y="0.5" width="15" height="15" fill="none" stroke="#8fbbe8"/><g fill="#fff" transform="translate(8 8)"><circle r="4.6"/><rect x="-1.3" y="-6.4" width="2.6" height="3" transform="rotate(0)"/><rect x="-1.3" y="-6.4" width="2.6" height="3" transform="rotate(45)"/><rect x="-1.3" y="-6.4" width="2.6" height="3" transform="rotate(90)"/><rect x="-1.3" y="-6.4" width="2.6" height="3" transform="rotate(135)"/><rect x="-1.3" y="-6.4" width="2.6" height="3" transform="rotate(180)"/><rect x="-1.3" y="-6.4" width="2.6" height="3" transform="rotate(225)"/><rect x="-1.3" y="-6.4" width="2.6" height="3" transform="rotate(270)"/><rect x="-1.3" y="-6.4" width="2.6" height="3" transform="rotate(315)"/></g><circle cx="8" cy="8" r="1.9" fill="#8ebde9"/></svg><div class="t nm" style="left:238px;top:586px">Service Host: DCOM Server Pro...</div><svg class="a" style="left:195px;top:587px" width="8" height="10" viewBox="0 0 8 10"><path d="M2 1 L6 5 L2 9" fill="none" stroke="#9a9a9a" stroke-width="1.3"/></svg>
<div class="a" style="left:421px;top:606px;width:73px;height:28px;background:#fff4c4"></div><div class="t num" style="left:421px;top:614px;width:67px">0%</div><div class="a" style="left:494px;top:606px;width:73px;height:28px;background:#f9eca8"></div><div class="t num" style="left:494px;top:614px;width:67px">9,3 MB</div><div class="a" style="left:567px;top:606px;width:73px;height:28px;background:#fff4c4"></div><div class="t num" style="left:567px;top:614px;width:67px">0 MB/s</div><div class="a" style="left:640px;top:606px;width:73px;height:28px;background:#fff4c4"></div><div class="t num" style="left:640px;top:614px;width:67px">0 Mbps</div><svg class="a" style="left:216px;top:612px" width="16" height="16" viewBox="0 0 16 16"><rect width="16" height="16" fill="#a3cbef"/><rect x="0.5" y="0.5" width="15" height="15" fill="none" stroke="#8fbbe8"/><g fill="#fff" transform="translate(8 8)"><circle r="4.6"/><rect x="-1.3" y="-6.4" width="2.6" height="3" transform="rotate(0)"/><rect x="-1.3" y="-6.4" width="2.6" height="3" transform="rotate(45)"/><rect x="-1.3" y="-6.4" width="2.6" height="3" transform="rotate(90)"/><rect x="-1.3" y="-6.4" width="2.6" height="3" transform="rotate(135)"/><rect x="-1.3" y="-6.4" width="2.6" height="3" transform="rotate(180)"/><rect x="-1.3" y="-6.4" width="2.6" height="3" transform="rotate(225)"/><rect x="-1.3" y="-6.4" width="2.6" height="3" transform="rotate(270)"/><rect x="-1.3" y="-6.4" width="2.6" height="3" transform="rotate(315)"/></g><circle cx="8" cy="8" r="1.9" fill="#8ebde9"/></svg><div class="t nm" style="left:238px;top:614px">Service Host: Local Service (11)</div><svg class="a" style="left:195px;top:615px" width="8" height="10" viewBox="0 0 8 10"><path d="M2 1 L6 5 L2 9" fill="none" stroke="#9a9a9a" stroke-width="1.3"/></svg>
<div class="a" style="left:421px;top:634px;width:73px;height:28px;background:#fff4c4"></div><div class="t num" style="left:421px;top:642px;width:67px">0%</div><div class="a" style="left:494px;top:634px;width:73px;height:28px;background:#f9eca8"></div><div class="t num" style="left:494px;top:642px;width:67px">1,4 MB</div><div class="a" style="left:567px;top:634px;width:73px;height:28px;background:#fff4c4"></div><div class="t num" style="left:567px;top:642px;width:67px">0 MB/s</div><div class="a" style="left:640px;top:634px;width:73px;height:28px;background:#fff4c4"></div><div class="t num" style="left:640px;top:642px;width:67px">0 Mbps</div><svg class="a" style="left:216px;top:640px" width="16" height="16" viewBox="0 0 16 16"><rect width="16" height="16" fill="#a3cbef"/><rect x="0.5" y="0.5" width="15" height="15" fill="none" stroke="#8fbbe8"/><g fill="#fff" transform="translate(8 8)"><circle r="4.6"/><rect x="-1.3" y="-6.4" width="2.6" height="3" transform="rotate(0)"/><rect x="-1.3" y="-6.4" width="2.6" height="3" transform="rotate(45)"/><rect x="-1.3" y="-6.4" width="2.6" height="3" transform="rotate(90)"/><rect x="-1.3" y="-6.4" width="2.6" height="3" transform="rotate(135)"/><rect x="-1.3" y="-6.4" width="2.6" height="3" transform="rotate(180)"/><rect x="-1.3" y="-6.4" width="2.6" height="3" transform="rotate(225)"/><rect x="-1.3" y="-6.4" width="2.6" height="3" transform="rotate(270)"/><rect x="-1.3" y="-6.4" width="2.6" height="3" transform="rotate(315)"/></g><circle cx="8" cy="8" r="1.9" fill="#8ebde9"/></svg><div class="t nm" style="left:238px;top:642px">Service Host: Local Service (Net...</div><svg class="a" style="left:195px;top:643px" width="8" height="10" viewBox="0 0 8 10"><path d="M2 1 L6 5 L2 9" fill="none" stroke="#9a9a9a" stroke-width="1.3"/></svg>
<div class="a" style="left:421px;top:662px;width:73px;height:28px;background:#fff4c4"></div><div class="t num" style="left:421px;top:670px;width:67px">0%</div><div class="a" style="left:494px;top:662px;width:73px;height:28px;background:#f9eca8"></div><div class="t num" style="left:494px;top:670px;width:67px">1,9 MB</div><div class="a" style="left:567px;top:662px;width:73px;height:28px;background:#fff4c4"></div><div class="t num" style="left:567px;top:670px;width:67px">0 MB/s</div><div class="a" style="left:640px;top:662px;width:73px;height:28px;background:#fff4c4"></div><div class="t num" style="left:640px;top:670px;width:67px">0 Mbps</div><svg class="a" style="left:216px;top:668px" width="16" height="16" viewBox="0 0 16 16"><rect width="16" height="16" fill="#a3cbef"/><rect x="0.5" y="0.5" width="15" height="15" fill="none" stroke="#8fbbe8"/><g fill="#fff" transform="translate(8 8)"><circle r="4.6"/><rect x="-1.3" y="-6.4" width="2.6" height="3" transform="rotate(0)"/><rect x="-1.3" y="-6.4" width="2.6" height="3" transform="rotate(45)"/><rect x="-1.3" y="-6.4" width="2.6" height="3" transform="rotate(90)"/><rect x="-1.3" y="-6.4" width="2.6" height="3" transform="rotate(135)"/><rect x="-1.3" y="-6.4" width="2.6" height="3" transform="rotate(180)"/><rect x="-1.3" y="-6.4" width="2.6" height="3" transform="rotate(225)"/><rect x="-1.3" y="-6.4" width="2.6" height="3" transform="rotate(270)"/><rect x="-1.3" y="-6.4" width="2.6" height="3" transform="rotate(315)"/></g><circle cx="8" cy="8" r="1.9" fill="#8ebde9"/></svg><div class="t nm" style="left:238px;top:670px">Service Host: Local Service (Net...</div><svg class="a" style="left:195px;top:671px" width="8" height="10" viewBox="0 0 8 10"><path d="M2 1 L6 5 L2 9" fill="none" stroke="#9a9a9a" stroke-width="1.3"/></svg>
<div class="a" style="left:421px;top:690px;width:73px;height:28px;background:#fff4c4"></div><div class="t num" style="left:421px;top:698px;width:67px">0%</div><div class="a" style="left:494px;top:690px;width:73px;height:28px;background:#f9eca8"></div><div class="t num" style="left:494px;top:698px;width:67px">11,1 MB</div><div class="a" style="left:567px;top:690px;width:73px;height:28px;background:#f9eca8"></div><div class="t num" style="left:567px;top:698px;width:67px">0,1 MB/s</div><div class="a" style="left:640px;top:690px;width:73px;height:28px;background:#fff4c4"></div><div class="t num" style="left:640px;top:698px;width:67px">0 Mbps</div><svg class="a" style="left:216px;top:696px" width="16" height="16" viewBox="0 0 16 16"><rect width="16" height="16" fill="#a3cbef"/><rect x="0.5" y="0.5" width="15" height="15" fill="none" stroke="#8fbbe8"/><g fill="#fff" transform="translate(8 8)"><circle r="4.6"/><rect x="-1.3" y="-6.4" width="2.6" height="3" transform="rotate(0)"/><rect x="-1.3" y="-6.4" width="2.6" height="3" transform="rotate(45)"/><rect x="-1.3" y="-6.4" width="2.6" height="3" transform="rotate(90)"/><rect x="-1.3" y="-6.4" width="2.6" height="3" transform="rotate(135)"/><rect x="-1.3" y="-6.4" width="2.6" height="3" transform="rotate(180)"/><rect x="-1.3" y="-6.4" width="2.6" height="3" transform="rotate(225)"/><rect x="-1.3" y="-6.4" width="2.6" height="3" transform="rotate(270)"/><rect x="-1.3" y="-6.4" width="2.6" height="3" transform="rotate(315)"/></g><circle cx="8" cy="8" r="1.9" fill="#8ebde9"/></svg><div class="t nm" style="left:238px;top:698px">Service Host: Local Service (Net...</div><svg class="a" style="left:195px;top:699px" width="8" height="10" viewBox="0 0 8 10"><path d="M2 1 L6 5 L2 9" fill="none" stroke="#9a9a9a" stroke-width="1.3"/></svg>
<div class="a" style="left:421px;top:718px;width:73px;height:28px;background:#fff4c4"></div><div class="t num" style="left:421px;top:726px;width:67px">0%</div><div class="a" style="left:494px;top:718px;width:73px;height:28px;background:#f9eca8"></div><div class="t num" style="left:494px;top:726px;width:67px">3,0 MB</div><div class="a" style="left:567px;top:718px;width:73px;height:28px;background:#fff4c4"></div><div class="t num" style="left:567px;top:726px;width:67px">0 MB/s</div><div class="a" style="left:640px;top:718px;width:73px;height:28px;background:#fff4c4"></div><div class="t num" style="left:640px;top:726px;width:67px">0 Mbps</div><svg class="a" style="left:216px;top:724px" width="16" height="16" viewBox="0 0 16 16"><rect width="16" height="16" fill="#a3cbef"/><rect x="0.5" y="0.5" width="15" height="15" fill="none" stroke="#8fbbe8"/><g fill="#fff" transform="translate(8 8)"><circle r="4.6"/><rect x="-1.3" y="-6.4" width="2.6" height="3" transform="rotate(0)"/><rect x="-1.3" y="-6.4" width="2.6" height="3" transform="rotate(45)"/><rect x="-1.3" y="-6.4" width="2.6" height="3" transform="rotate(90)"/><rect x="-1.3" y="-6.4" width="2.6" height="3" transform="rotate(135)"/><rect x="-1.3" y="-6.4" width="2.6" height="3" transform="rotate(180)"/><rect x="-1.3" y="-6.4" width="2.6" height="3" transform="rotate(225)"/><rect x="-1.3" y="-6.4" width="2.6" height="3" transform="rotate(270)"/><rect x="-1.3" y="-6.4" width="2.6" height="3" transform="rotate(315)"/></g><circle cx="8" cy="8" r="1.9" fill="#8ebde9"/></svg><div class="t nm" style="left:238px;top:726px">Service Host: Local Service (No l...</div><svg class="a" style="left:195px;top:727px" width="8" height="10" viewBox="0 0 8 10"><path d="M2 1 L6 5 L2 9" fill="none" stroke="#9a9a9a" stroke-width="1.3"/></svg>
<div class="a" style="left:421px;top:746px;width:73px;height:28px;background:#fff4c4"></div><div class="t num" style="left:421px;top:754px;width:67px">0%</div><div class="a" style="left:494px;top:746px;width:73px;height:28px;background:#f9eca8"></div><div class="t num" style="left:494px;top:754px;width:67px">12,2 MB</div><div class="a" style="left:567px;top:746px;width:73px;height:28px;background:#fff4c4"></div><div class="t num" style="left:567px;top:754px;width:67px">0 MB/s</div><div class="a" style="left:640px;top:746px;width:73px;height:28px;background:#fff4c4"></div><div class="t num" style="left:640px;top:754px;width:67px">0 Mbps</div><svg class="a" style="left:216px;top:752px" width="16" height="16" viewBox="0 0 16 16"><rect width="16" height="16" fill="#a3cbef"/><rect x="0.5" y="0.5" width="15" height="15" fill="none" stroke="#8fbbe8"/><g fill="#fff" transform="translate(8 8)"><circle r="4.6"/><rect x="-1.3" y="-6.4" width="2.6" height="3" transform="rotate(0)"/><rect x="-1.3" y="-6.4" width="2.6" height="3" transform="rotate(45)"/><rect x="-1.3" y="-6.4" width="2.6" height="3" transform="rotate(90)"/><rect x="-1.3" y="-6.4" width="2.6" height="3" transform="rotate(135)"/><rect x="-1.3" y="-6.4" width="2.6" height="3" transform="rotate(180)"/><rect x="-1.3" y="-6.4" width="2.6" height="3" transform="rotate(225)"/><rect x="-1.3" y="-6.4" width="2.6" height="3" transform="rotate(270)"/><rect x="-1.3" y="-6.4" width="2.6" height="3" transform="rotate(315)"/></g><circle cx="8" cy="8" r="1.9" fill="#8ebde9"/></svg><div class="t nm" style="left:238px;top:754px">Service Host: Local Service (No ...</div><svg class="a" style="left:195px;top:755px" width="8" height="10" viewBox="0 0 8 10"><path d="M2 1 L6 5 L2 9" fill="none" stroke="#9a9a9a" stroke-width="1.3"/></svg>
<div class="a" style="left:421px;top:774px;width:73px;height:28px;background:#fff4c4"></div><div class="t num" style="left:421px;top:782px;width:67px">0%</div><div class="a" style="left:494px;top:774px;width:73px;height:28px;background:#f9eca8"></div><div class="t num" style="left:494px;top:782px;width:67px">28,1 MB</div><div class="a" style="left:567px;top:774px;width:73px;height:28px;background:#fff4c4"></div><div class="t num" style="left:567px;top:782px;width:67px">0 MB/s</div><div class="a" style="left:640px;top:774px;width:73px;height:28px;background:#fff4c4"></div><div class="t num" style="left:640px;top:782px;width:67px">0 Mbps</div><svg class="a" style="left:216px;top:780px" width="16" height="16" viewBox="0 0 16 16"><rect width="16" height="16" fill="#a3cbef"/><rect x="0.5" y="0.5" width="15" height="15" fill="none" stroke="#8fbbe8"/><g fill="#fff" transform="translate(8 8)"><circle r="4.6"/><rect x="-1.3" y="-6.4" width="2.6" height="3" transform="rotate(0)"/><rect x="-1.3" y="-6.4" width="2.6" height="3" transform="rotate(45)"/><rect x="-1.3" y="-6.4" width="2.6" height="3" transform="rotate(90)"/><rect x="-1.3" y="-6.4" width="2.6" height="3" transform="rotate(135)"/><rect x="-1.3" y="-6.4" width="2.6" height="3" transform="rotate(180)"/><rect x="-1.3" y="-6.4" width="2.6" height="3" transform="rotate(225)"/><rect x="-1.3" y="-6.4" width="2.6" height="3" transform="rotate(270)"/><rect x="-1.3" y="-6.4" width="2.6" height="3" transform="rotate(315)"/></g><circle cx="8" cy="8" r="1.9" fill="#8ebde9"/></svg><div class="t nm" style="left:238px;top:782px">Service Host: Local System (16)</div><svg class="a" style="left:195px;top:783px" width="8" height="10" viewBox="0 0 8 10"><path d="M2 1 L6 5 L2 9" fill="none" stroke="#9a9a9a" stroke-width="1.3"/></svg>
<div class="a" style="left:421px;top:802px;width:73px;height:28px;background:#fff4c4"></div><div class="t num" style="left:421px;top:810px;width:67px">0%</div><div class="a" style="left:494px;top:802px;width:73px;height:28px;background:#f9eca8"></div><div class="t num" style="left:494px;top:810px;width:67px">4,2 MB</div><div class="a" style="left:567px;top:802px;width:73px;height:28px;background:#f9eca8"></div><div class="t num" style="left:567px;top:810px;width:67px">0,1 MB/s</div><div class="a" style="left:640px;top:802px;width:73px;height:28px;background:#fff4c4"></div><div class="t num" style="left:640px;top:810px;width:67px">0 Mbps</div><svg class="a" style="left:216px;top:808px" width="16" height="16" viewBox="0 0 16 16"><rect width="16" height="16" fill="#a3cbef"/><rect x="0.5" y="0.5" width="15" height="15" fill="none" stroke="#8fbbe8"/><g fill="#fff" transform="translate(8 8)"><circle r="4.6"/><rect x="-1.3" y="-6.4" width="2.6" height="3" transform="rotate(0)"/><rect x="-1.3" y="-6.4" width="2.6" height="3" transform="rotate(45)"/><rect x="-1.3" y="-6.4" width="2.6" height="3" transform="rotate(90)"/><rect x="-1.3" y="-6.4" width="2.6" height="3" transform="rotate(135)"/><rect x="-1.3" y="-6.4" width="2.6" height="3" transform="rotate(180)"/><rect x="-1.3" y="-6.4" width="2.6" height="3" transform="rotate(225)"/><rect x="-1.3" y="-6.4" width="2.6" height="3" transform="rotate(270)"/><rect x="-1.3" y="-6.4" width="2.6" height="3" transform="rotate(315)"/></g><circle cx="8" cy="8" r="1.9" fill="#8ebde9"/></svg><div class="t nm" style="left:238px;top:810px">Service Host: Local System (Net...</div><svg class="a" style="left:195px;top:811px" width="8" height="10" viewBox="0 0 8 10"><path d="M2 1 L6 5 L2 9" fill="none" stroke="#9a9a9a" stroke-width="1.3"/></svg>
<div class="a" style="left:421px;top:142px;width:1px;height:680px;background:#ecdcaa"></div><div class="a" style="left:494px;top:142px;width:1px;height:680px;background:#ecdcaa"></div><div class="a" style="left:567px;top:142px;width:1px;height:680px;background:#ecdcaa"></div><div class="a" style="left:640px;top:142px;width:1px;height:680px;background:#ecdcaa"></div><div class="a" style="left:713px;top:142px;width:1px;height:680px;background:#ecdcaa"></div>
</div>
<div class="a" style="left:188px;top:822px;width:1178px;height:1px;background:#a0a0a0"></div>
<svg class="a" style="left:194px;top:836px" width="21" height="21" viewBox="0 0 21 21"><circle cx="10.5" cy="10.5" r="9.2" fill="none" stroke="#9a9a9a" stroke-width="1"/><path d="M6.5 12.5 L10.5 8.5 L14.5 12.5" fill="none" stroke="#9a9a9a" stroke-width="1"/></svg>
<div class="t" style="left:222px;top:841px;letter-spacing:-0.3px">Fewer details</div>
<div class="a" style="left:1275px;top:836px;width:83px;height:21px;background:#cccccc;border:1px solid #bfbfbf"></div>
<div class="t" style="left:1275px;top:841px;width:83px;text-align:center;color:#838383">End task</div>

<div id="fly"><div class="a" style="left:-40px;top:-40px;width:185px;height:285px;background:#5a6a75;opacity:0.45;filter:blur(16px)"></div><div class="a" style="left:-60px;top:240px;width:150px;height:230px;background:#2a5a7a;opacity:0.22;filter:blur(30px)"></div><div class="a" style="left:70px;top:226px;width:80px;height:14px;background:#8a9aa8;opacity:0.25;filter:blur(6px)"></div>
<svg class="a" style="left:15px;top:21px" width="170" height="45" viewBox="0 0 170 45"><g fill="none" stroke="#fff" stroke-width="2.5" stroke-linejoin="round">
<path d="M8.4 14 L18 7.2 M18 7 V40.2"/>
<path d="M45.4 40.2 V7.6 M45.4 7.6 L28.5 30.9 H51.6"/>
<path d="M65.2 11.8 C66.5 8.8 69.5 7 73.2 7 C78 7 81.2 10.2 81.2 14.6 C81.2 18.8 78.6 22 74.2 26.6 L64.6 38.9 H82.8"/>
<path d="M90 14 L99.5 7.2 M99.5 7 V40.2"/>
<path d="M124 14 L133.6 7.2 M133.6 7 V40.2"/>
<path d="M147.6 14 L157 7.2 M157 7 V40.2"/>
</g><g fill="#fff"><circle cx="56.7" cy="14" r="1.9"/><circle cx="56.7" cy="34" r="1.9"/><circle cx="114.3" cy="14" r="1.9"/><circle cx="114.3" cy="34" r="1.9"/></g></svg>
<div class="a" style="left:25px;top:77px;font-size:14.3px;line-height:14px;color:#5aa9ea;white-space:nowrap">11 Haziran 2017 Pazar</div>
<div class="a" style="left:0;top:113px;width:360px;height:1px;background:rgba(255,255,255,0.22)"></div>
<div class="a" style="left:24px;top:134px;font-size:14.5px;line-height:14px;color:#e8e8e8;white-space:nowrap">Haziran 2017</div>
<svg class="a" style="left:267px;top:134px" width="18" height="11" viewBox="0 0 18 11"><path d="M1 10 L9 2 L17 10" fill="none" stroke="#d8d8d8" stroke-width="1.2"/></svg>
<svg class="a" style="left:315px;top:134px" width="18" height="11" viewBox="0 0 18 11"><path d="M1 1 L9 9 L17 1" fill="none" stroke="#d8d8d8" stroke-width="1.2"/></svg>
<div class="ch" style="left:12px;top:174px">Pt</div><div class="ch" style="left:60px;top:174px">Sa</div><div class="ch" style="left:108px;top:174px">Ça</div><div class="ch" style="left:156px;top:174px">Pe</div><div class="ch" style="left:204px;top:174px">Cu</div><div class="ch" style="left:252px;top:174px">Ct</div><div class="ch" style="left:300px;top:174px">Pa</div>
<div class="a" style="left:301px;top:241px;width:46px;height:40px;background:#0078d7;border:2px solid #0a84e6;box-shadow:inset 0 0 0 2px #000"></div>
<div class="cd cg" style="left:12px;top:210px">29</div><div class="cd cg" style="left:60px;top:210px">30</div><div class="cd cg" style="left:108px;top:210px">31</div><div class="cd" style="left:156px;top:210px">1</div><div class="cd" style="left:204px;top:210px">2</div><div class="cd" style="left:252px;top:210px">3</div><div class="cd" style="left:300px;top:210px">4</div><div class="cd" style="left:12px;top:252px">5</div><div class="cd" style="left:60px;top:252px">6</div><div class="cd" style="left:108px;top:252px">7</div><div class="cd" style="left:156px;top:252px">8</div><div class="cd" style="left:204px;top:252px">9</div><div class="cd" style="left:252px;top:252px">10</div><div class="cd" style="left:300px;top:252px;font-weight:bold">11</div><div class="cd" style="left:12px;top:294px">12</div><div class="cd" style="left:60px;top:294px">13</div><div class="cd" style="left:108px;top:294px">14</div><div class="cd" style="left:156px;top:294px">15</div><div class="cd" style="left:204px;top:294px">16</div><div class="cd" style="left:252px;top:294px">17</div><div class="cd" style="left:300px;top:294px">18</div><div class="cd" style="left:12px;top:336px">19</div><div class="cd" style="left:60px;top:336px">20</div><div class="cd" style="left:108px;top:336px">21</div><div class="cd" style="left:156px;top:336px">22</div><div class="cd" style="left:204px;top:336px">23</div><div class="cd" style="left:252px;top:336px">24</div><div class="cd" style="left:300px;top:336px">25</div><div class="cd" style="left:12px;top:378px">26</div><div class="cd" style="left:60px;top:378px">27</div><div class="cd" style="left:108px;top:378px">28</div><div class="cd" style="left:156px;top:378px">29</div><div class="cd" style="left:204px;top:378px">30</div><div class="cd cg" style="left:252px;top:378px">1</div><div class="cd cg" style="left:300px;top:378px">2</div><div class="cd cg" style="left:12px;top:420px">3</div><div class="cd cg" style="left:60px;top:420px">4</div><div class="cd cg" style="left:108px;top:420px">5</div><div class="cd cg" style="left:156px;top:420px">6</div><div class="cd cg" style="left:204px;top:420px">7</div><div class="cd cg" style="left:252px;top:420px">8</div><div class="cd cg" style="left:300px;top:420px">9</div>
<div class="a" style="left:222px;top:467px;font-size:14.5px;line-height:14px;color:#4aa0e8;white-space:nowrap">Set up agenda</div>
<svg class="a" style="left:323px;top:471px" width="14" height="9" viewBox="0 0 14 9"><path d="M1.5 7.5 L7 2 L12.5 7.5" fill="none" stroke="#4aa0e8" stroke-width="1.3"/></svg>
</div>

<div id="tb">
<svg class="a" style="left:16px;top:12px" width="16" height="16" viewBox="0 0 16 16"><g fill="#fff"><path d="M0 2.3 L6.5 1.4 V7.4 H0 Z"/><path d="M7.4 1.2 L16 0 V7.4 H7.4 Z"/><path d="M0 8.3 H6.5 V14.4 L0 13.6 Z"/><path d="M7.4 8.3 H16 V16 L7.4 14.7 Z"/></g></svg>
<svg class="a" style="left:63px;top:8px" width="24" height="24" viewBox="0 0 48 48"><path d="M3.82 11.05 A24 24 0 0 1 45.3 13 L24 13 L14.5 29.5 Z" fill="#db4437"/><path d="M45.3 13 A24 24 0 0 1 22.9 48 L33.5 29.5 L24 13 Z" fill="#fcc934"/><path d="M22.9 48 A24 24 0 0 1 3.82 11.05 L14.5 29.5 L33.5 29.5 Z" fill="#1e9e48"/><circle cx="24" cy="24" r="11.5" fill="#fff"/><circle cx="24" cy="24" r="9.2" fill="#4285f4"/></svg>
<svg class="a" style="left:112px;top:10px" width="24" height="21" viewBox="0 0 24 21">
<path d="M0.5 6 L5 4 L5 17 L0.5 18 Z" fill="#c8c8c8"/><rect x="1" y="6.5" width="2" height="1.5" fill="#3fd23f"/>
<path d="M5 2 L22 0.5 L23.5 1.5 L23.5 14 L6 15.5 Z" fill="#e8e8e8" stroke="#b8b8b8" stroke-width="0.6"/>
<path d="M7 3.5 L22 2.3 L22 12.8 L7 14 Z" fill="#dff2ff"/>
<polyline points="7.5,10 10,9 11.5,5 13,11 15,7 16.5,10 18,8 19.5,10 21.5,9.5" fill="none" stroke="#3a8fd0" stroke-width="0.9"/>
<path d="M12 15 L15 15 L15 17 L12 17 Z" fill="#bbb"/><ellipse cx="13.5" cy="19" rx="6" ry="2" fill="#d0d0d0"/>
</svg>
<div class="a" style="left:104px;top:38px;width:40px;height:2px;background:#76b9ed"></div>
<svg class="a" style="left:1710px;top:15px" width="14" height="9" viewBox="0 0 14 9"><path d="M1.5 8 L7 2.5 L12.5 8" fill="none" stroke="#fff" stroke-width="1.2"/></svg>
<svg class="a" style="left:1733px;top:12px" width="16" height="16" viewBox="0 0 16 16"><defs><linearGradient id="tbs" x1="0" y1="0" x2="0" y2="1"><stop offset="0" stop-color="#111a36"/><stop offset="0.55" stop-color="#14306a"/><stop offset="1" stop-color="#0f72b0"/></linearGradient></defs><circle cx="8" cy="8" r="8" fill="url(#tbs)"/><path d="M0.2 9.2 L4.8 10.2 L4.4 13.6 L1.2 12.4 Z" fill="#fff"/><line x1="10.4" y1="5.8" x2="4.8" y2="11.6" stroke="#fff" stroke-width="2.6"/><circle cx="10.8" cy="5.2" r="3.3" fill="#fff"/><circle cx="10.8" cy="5.2" r="1.8" fill="#1c2a5a"/><circle cx="4.8" cy="11.6" r="2" fill="#fff"/><circle cx="4.8" cy="11.6" r="0.9" fill="#3b6fa0" opacity="0.6"/></svg>
<svg class="a" style="left:1756px;top:13px" width="18" height="15" viewBox="0 0 18 15"><path d="M0.5 5 H3.5 L7.5 1 V14 L3.5 10 H0.5 Z" fill="none" stroke="#fff" stroke-width="1"/><path d="M10 5 Q11.3 7.5 10 10" fill="none" stroke="#fff" stroke-width="1"/><path d="M12.5 3 Q14.8 7.5 12.5 12" fill="none" stroke="#fff" stroke-width="1"/><path d="M15 1 Q18.3 7.5 15 14" fill="none" stroke="#fff" stroke-width="1"/></svg>
<svg class="a" style="left:1781px;top:14px" width="17" height="14" viewBox="0 0 17 14"><rect x="3.5" y="0.5" width="13" height="9" fill="none" stroke="#fff"/><path d="M10 9.5 V12.5 M6 13 H14" stroke="#fff"/><rect x="0.5" y="1.5" width="4" height="4" fill="#040609" stroke="#fff"/><path d="M2.5 5.5 V13" stroke="#fff"/><path d="M1.5 3 L2.5 4 L3.8 2.3" fill="none" stroke="#fff" stroke-width="0.8"/></svg>
<div class="a" style="left:1800px;top:5px;width:68px;text-align:center;color:#fff;font-size:12px;line-height:12px;letter-spacing:-0.3px">14:21</div>
<div class="a" style="left:1800px;top:23px;width:68px;text-align:center;color:#fff;font-size:12px;line-height:12px;letter-spacing:-0.6px">11.06.2017</div>
<svg class="a" style="left:1878px;top:11px" width="28" height="29" viewBox="0 0 28 29"><path d="M1 1 H17 V14 H8 L5 17 V14 H1 Z" fill="#fff"/><path d="M3 4.5 H14 M3 7.5 H14 M3 10.5 H11" stroke="#040609" stroke-width="1"/><circle cx="16.7" cy="16.5" r="8" fill="#2b2b2b" stroke="#8a8a8a" stroke-width="1.1"/><text x="16.9" y="21" text-anchor="middle" font-family="Liberation Sans" font-weight="bold" font-size="12" fill="#fff">1</text></svg>
<div class="a" style="left:1915px;top:0;width:1px;height:40px;background:#5a5a5a"></div>
</div>

</body></html>
